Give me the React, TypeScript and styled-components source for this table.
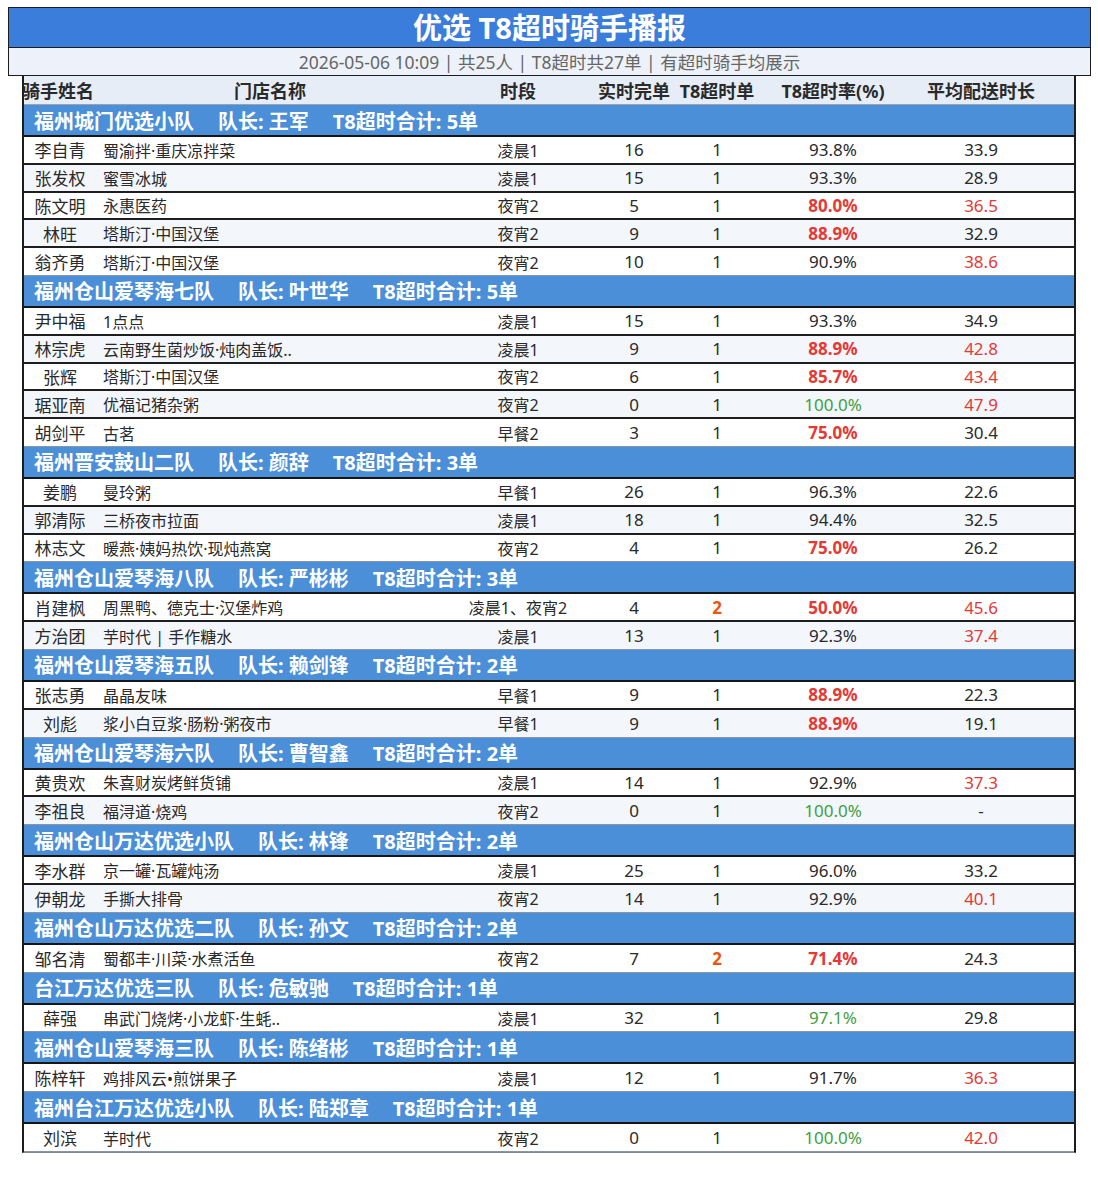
import styled, { createGlobalStyle } from "styled-components";

interface RiderType {
  name: string;
  store: string;
  period: string;
  done: number;
  late: number;
  rate: string;
  avg: string;
}

interface TeamType {
  team: string;
  leader: string;
  total: number;
  riders: RiderType[];
}

const r = (
  name: string,
  store: string,
  period: string,
  done: number,
  late: number,
  rate: string,
  avg: string
): RiderType => ({ name, store, period, done, late, rate, avg });

const teams: TeamType[] = [
  {
    team: "福州城门优选小队",
    leader: "王军",
    total: 5,
    riders: [
      r("李自青", "蜀渝拌·重庆凉拌菜", "凌晨1", 16, 1, "93.8", "33.9"),
      r("张发权", "蜜雪冰城", "凌晨1", 15, 1, "93.3", "28.9"),
      r("陈文明", "永惠医药", "夜宵2", 5, 1, "80.0", "36.5"),
      r("林旺", "塔斯汀·中国汉堡", "夜宵2", 9, 1, "88.9", "32.9"),
      r("翁齐勇", "塔斯汀·中国汉堡", "夜宵2", 10, 1, "90.9", "38.6"),
    ],
  },
  {
    team: "福州仓山爱琴海七队",
    leader: "叶世华",
    total: 5,
    riders: [
      r("尹中福", "1点点", "凌晨1", 15, 1, "93.3", "34.9"),
      r("林宗虎", "云南野生菌炒饭·炖肉盖饭..", "凌晨1", 9, 1, "88.9", "42.8"),
      r("张辉", "塔斯汀·中国汉堡", "夜宵2", 6, 1, "85.7", "43.4"),
      r("琚亚南", "优福记猪杂粥", "夜宵2", 0, 1, "100.0", "47.9"),
      r("胡剑平", "古茗", "早餐2", 3, 1, "75.0", "30.4"),
    ],
  },
  {
    team: "福州晋安鼓山二队",
    leader: "颜辞",
    total: 3,
    riders: [
      r("姜鹏", "曼玲粥", "早餐1", 26, 1, "96.3", "22.6"),
      r("郭清际", "三桥夜市拉面", "凌晨1", 18, 1, "94.4", "32.5"),
      r("林志文", "暖燕·姨妈热饮·现炖燕窝", "夜宵2", 4, 1, "75.0", "26.2"),
    ],
  },
  {
    team: "福州仓山爱琴海八队",
    leader: "严彬彬",
    total: 3,
    riders: [
      r("肖建枫", "周黑鸭、德克士·汉堡炸鸡", "凌晨1、夜宵2", 4, 2, "50.0", "45.6"),
      r("方治团", "芋时代 | 手作糖水", "凌晨1", 13, 1, "92.3", "37.4"),
    ],
  },
  {
    team: "福州仓山爱琴海五队",
    leader: "赖剑锋",
    total: 2,
    riders: [
      r("张志勇", "晶晶友味", "早餐1", 9, 1, "88.9", "22.3"),
      r("刘彪", "浆小白豆浆·肠粉·粥夜市", "早餐1", 9, 1, "88.9", "19.1"),
    ],
  },
  {
    team: "福州仓山爱琴海六队",
    leader: "曹智鑫",
    total: 2,
    riders: [
      r("黄贵欢", "朱喜财炭烤鲜货铺", "凌晨1", 14, 1, "92.9", "37.3"),
      r("李祖良", "福浔道·烧鸡", "夜宵2", 0, 1, "100.0", "-"),
    ],
  },
  {
    team: "福州仓山万达优选小队",
    leader: "林锋",
    total: 2,
    riders: [
      r("李水群", "京一罐·瓦罐炖汤", "凌晨1", 25, 1, "96.0", "33.2"),
      r("伊朝龙", "手撕大排骨", "夜宵2", 14, 1, "92.9", "40.1"),
    ],
  },
  {
    team: "福州仓山万达优选二队",
    leader: "孙文",
    total: 2,
    riders: [r("邹名清", "蜀都丰·川菜·水煮活鱼", "夜宵2", 7, 2, "71.4", "24.3")],
  },
  {
    team: "台江万达优选三队",
    leader: "危敏驰",
    total: 1,
    riders: [r("薛强", "串武门烧烤·小龙虾·生蚝..", "凌晨1", 32, 1, "97.1", "29.8")],
  },
  {
    team: "福州仓山爱琴海三队",
    leader: "陈绪彬",
    total: 1,
    riders: [r("陈梓轩", "鸡排风云•煎饼果子", "凌晨1", 12, 1, "91.7", "36.3")],
  },
  {
    team: "福州台江万达优选小队",
    leader: "陆郑章",
    total: 1,
    riders: [r("刘滨", "芋时代", "夜宵2", 0, 1, "100.0", "42.0")],
  },
];

const COLS = "72px 348px 148px 84px 82px 150px 146px 20px";

const GlobalStyle = createGlobalStyle`
  body {
    margin: 0;
    background: #ffffff;
    font-family: "Noto Sans", "Noto Sans CJK SC", sans-serif;
    color: #2a2a2a;
  }
`;

const Page = styled.div`
  padding: 7px 0 40px 8px;
`;

const Title = styled.div`
  box-sizing: border-box;
  width: 1083px;
  height: 41px;
  display: flex;
  align-items: center;
  justify-content: center;
  background-color: #3b7ddb;
  border: 1.5px solid #1c1c1c;
  color: #ffffff;
  font-size: 29px;
  font-weight: 700;
  line-height: 1;
`;

const SubTitle = styled.div`
  box-sizing: border-box;
  width: 1083px;
  height: 28px;
  display: flex;
  align-items: center;
  justify-content: center;
  background-color: #edf2fa;
  border: 1.5px solid #1c1c1c;
  border-top: none;
  color: #666666;
  font-size: 17.5px;
`;

const Table = styled.div`
  box-sizing: border-box;
  width: 1054px;
  margin-left: 14px;
  border-left: 2px solid #1c1c1c;
  border-right: 2px solid #1c1c1c;
  border-bottom: 1px solid #7d8896;
`;

const HeadRow = styled.div`
  display: grid;
  grid-template-columns: ${COLS};
  height: 28px;
  align-items: center;
  background-color: #e6edf7;
  border-bottom: 1px solid #97a3b3;
  font-size: 18px;
  font-weight: 700;
  color: #2a2a2a;
  white-space: nowrap;

  > span {
    text-align: center;
  }
  > span:first-child {
    text-align: left;
    margin-left: -2px;
  }
`;

const TeamRow = styled.div`
  height: 30px;
  display: flex;
  align-items: center;
  gap: 24px;
  padding-left: 10px;
  background-color: #4a8fd8;
  border-bottom: 2px solid #161616;
  color: #ffffff;
  font-size: 20px;
  font-weight: 700;
  white-space: nowrap;
`;

const Row = styled.div<{ $alt: boolean; $last: boolean }>`
  display: grid;
  grid-template-columns: ${COLS};
  height: ${(p) => (p.$last ? "26.8px" : "25.8px")};
  align-items: center;
  background-color: ${(p) => (p.$alt ? "#f3f6fb" : "#ffffff")};
  border-bottom: ${(p) => (p.$last ? "1px solid #8c96a3" : "2px solid #1e1e1e")};
  font-size: 16px;
  white-space: nowrap;
`;

const Name = styled.span`
  text-align: center;
  font-size: 17px;
`;

const Store = styled.span`
  padding-left: 7px;
  overflow: hidden;
`;

const Cell = styled.span<{ $big?: boolean }>`
  text-align: center;
  font-size: ${(p) => (p.$big ? "17px" : "16px")};
`;

const LateCell = styled(Cell)<{ $many: boolean }>`
  color: ${(p) => (p.$many ? "#e8560f" : "inherit")};
  font-weight: ${(p) => (p.$many ? 700 : 400)};
`;

const RateCell = styled(Cell)<{ $tone: "bad" | "good" | "normal" }>`
  color: ${(p) =>
    p.$tone === "bad" ? "#e53935" : p.$tone === "good" ? "#3f9f3f" : "inherit"};
  font-weight: ${(p) => (p.$tone === "bad" ? 700 : 400)};
`;

const AvgCell = styled(Cell)<{ $slow: boolean }>`
  color: ${(p) => (p.$slow ? "#e53935" : "inherit")};
`;

const rateTone = (rate: string) => {
  const v = parseFloat(rate);
  if (v < 90) return "bad";
  if (v >= 97) return "good";
  return "normal";
};

const App = () => {
  return (
    <Page>
      <GlobalStyle />
      <Title>优选 T8超时骑手播报</Title>
      <SubTitle>2026-05-06 10:09 | 共25人 | T8超时共27单 | 有超时骑手均展示</SubTitle>
      <Table>
        <HeadRow>
          <span>骑手姓名</span>
          <span>门店名称</span>
          <span>时段</span>
          <span>实时完单</span>
          <span>T8超时单</span>
          <span>T8超时率(%)</span>
          <span>平均配送时长</span>
          <span />
        </HeadRow>
        {teams.map((t) => (
          <div key={t.team}>
            <TeamRow>
              <span>{t.team}</span>
              <span>队长: {t.leader}</span>
              <span>T8超时合计: {t.total}单</span>
            </TeamRow>
            {t.riders.map((rider, i) => (
              <Row key={rider.name} $alt={i % 2 === 1} $last={i === t.riders.length - 1}>
                <Name>{rider.name}</Name>
                <Store>{rider.store}</Store>
                <Cell>{rider.period}</Cell>
                <Cell $big>{rider.done}</Cell>
                <LateCell $big $many={rider.late > 1}>
                  {rider.late}
                </LateCell>
                <RateCell $big $tone={rateTone(rider.rate)}>
                  {rider.rate}%
                </RateCell>
                <AvgCell $big $slow={rider.avg !== "-" && parseFloat(rider.avg) > 35}>
                  {rider.avg}
                </AvgCell>
                <span />
              </Row>
            ))}
          </div>
        ))}
      </Table>
    </Page>
  );
};

export default App;
